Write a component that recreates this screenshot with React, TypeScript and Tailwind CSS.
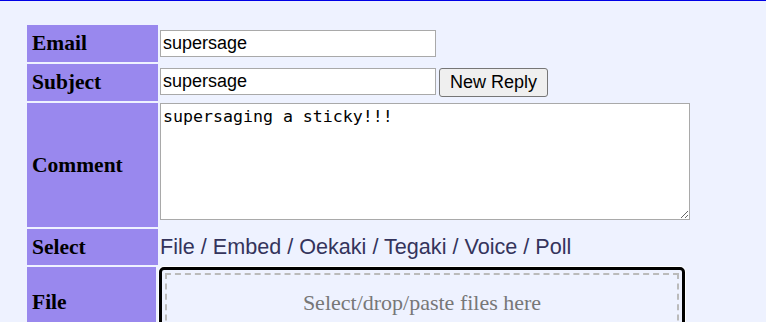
import React from 'react';

const labelCls =
  "bg-[#9988ee] flex items-center pl-[5px] font-bold text-[21.5px] text-black [font-family:'Liberation_Serif',serif]";

const App: React.FC = () => {
  return (
    <div className="min-h-screen bg-[#eef2ff] border-t border-[#0000e6]">
      {/* post form */}
      <div className="pt-[24px] pl-[27px]">
        <div className="grid grid-cols-[131px_auto] gap-[2px] w-fit">
          {/* Email */}
          <div className={`${labelCls} h-[37px]`}>Email</div>
          <div className="flex items-center">
            <input
              defaultValue="supersage"
              className="w-[276px] h-[27px] bg-white border border-[#a9a9a9] px-[2px] text-[18px] text-black [font-family:'Liberation_Sans',Arial,sans-serif] outline-none"
            />
          </div>

          {/* Subject */}
          <div className={`${labelCls} h-[37px]`}>Subject</div>
          <div className="flex items-center gap-[3px]">
            <input
              defaultValue="supersage"
              className="w-[276px] h-[27px] -mt-[2px] bg-white border border-[#a9a9a9] px-[2px] text-[18px] text-black [font-family:'Liberation_Sans',Arial,sans-serif] outline-none"
            />
            <button className="w-[109px] h-[29px] bg-[#efefef] border border-[#767676] rounded-[3px] text-[18px] text-black [font-family:'Liberation_Sans',Arial,sans-serif]">
              New Reply
            </button>
          </div>

          {/* Comment */}
          <div className={`${labelCls} h-[124px]`}>Comment</div>
          <div>
            <textarea
              defaultValue="supersaging a sticky!!!"
              className="block w-[530px] h-[117px] bg-white border border-[#a9a9a9] px-[2px] py-[3px] text-[16.6px] leading-[20px] text-black [font-family:'DejaVu_Sans_Mono',monospace] outline-none resize"
            />
          </div>

          {/* Select */}
          <div className={`${labelCls} h-[36px]`}>Select</div>
          <div className="flex items-center pt-[1px] text-[21.6px] text-[#34345c] [font-family:'Liberation_Sans',Arial,sans-serif]">
            File / Embed / Oekaki / Tegaki / Voice / Poll
          </div>

          {/* File */}
          <div className={`${labelCls} h-[70px] mr-[2px]`}>File</div>
          <div className="-ml-px">
            <div className="w-[526px] h-[70px] border-[3px] border-black rounded-[5px] p-[3px] ring-1 ring-white">
              <div className="h-full border-2 border-dashed border-[#bbbbbb] flex items-center justify-center pt-[1px] text-[22px] text-[#777777] [font-family:'Liberation_Serif',serif]">
                Select/drop/paste files here
              </div>
            </div>
          </div>
        </div>
      </div>
    </div>
  );
};

export default App;
